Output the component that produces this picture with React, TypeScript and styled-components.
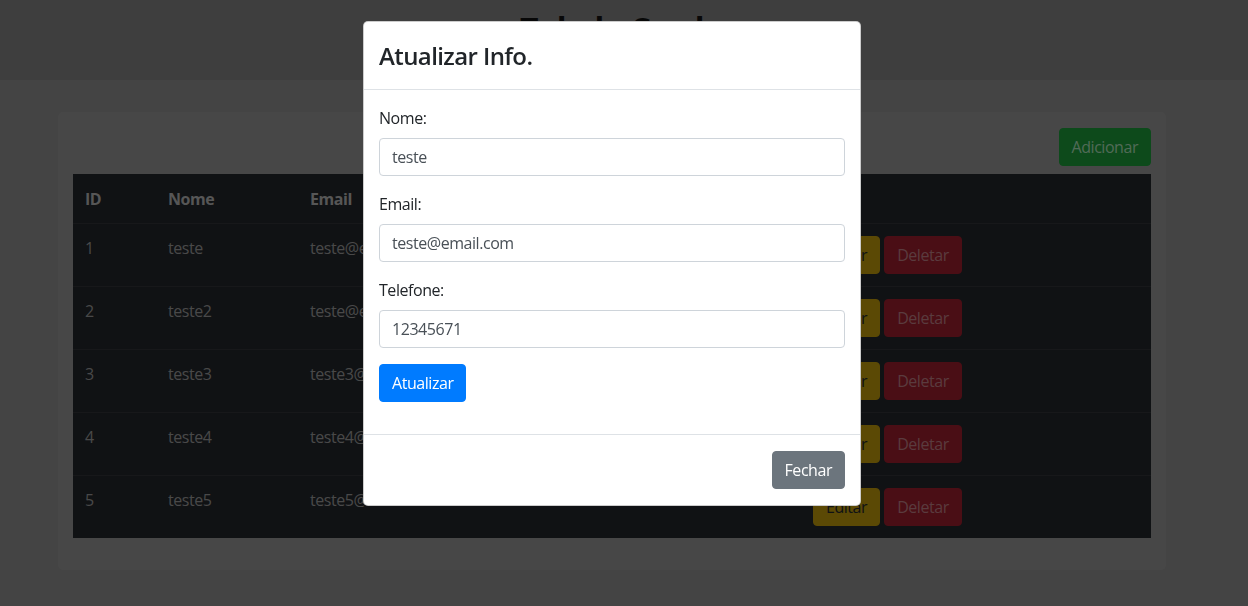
import React from "react";
import styled, { createGlobalStyle } from "styled-components";

const Global = createGlobalStyle`
  html, body { margin: 0; padding: 0; }
  body {
    background: #888888;
    font-family: "Open Sans", "Noto Sans", Arial, sans-serif;
    font-size: 16px;
    line-height: 1.5;
    letter-spacing: -0.45px;
    color: #212529;
    overflow: hidden;
  }
  * { box-sizing: border-box; }
`;

const Page = styled.div`
  min-height: 606px;
  padding-right: 24px;
`;

const TopBar = styled.header`
  height: 80px;
  margin-right: -24px;
  padding: 10px 24px 0 0;
  background: #7c7c7c;
`;

const PageTitle = styled.h1`
  margin: 0;
  text-align: center;
  font-size: 32px;
  line-height: 1.2;
  font-weight: 700;
  letter-spacing: -0.6px;
  color: #111;
`;

const Container = styled.main`
  width: 1108px;
  margin: 32px auto 0;
`;

const Card = styled.section`
  background: #8f8f8f;
  border-radius: 5px;
  padding: 16px 15px 32px;
`;

const Toolbar = styled.div`
  display: flex;
  justify-content: flex-end;
  margin-bottom: 8px;
`;

const Btn = styled.button<{ $bg: string; $fg: string }>`
  display: inline-block;
  height: 38px;
  padding: 6px 12px;
  border: 1px solid ${(p) => p.$bg};
  border-radius: 4px;
  background: ${(p) => p.$bg};
  color: ${(p) => p.$fg};
  font-family: inherit;
  font-size: 16px;
  line-height: 24px;
  letter-spacing: inherit;
  cursor: pointer;
`;

const Table = styled.table`
  width: 100%;
  border-collapse: collapse;
  background: #212529;
  table-layout: fixed;
`;

const Th = styled.th<{ $w?: number }>`
  width: ${(p) => (p.$w ? `${p.$w}px` : "auto")};
  text-align: left;
  padding: 12px;
  border-top: 1px solid #212529;
  color: #acacac;
  font-weight: 700;
  vertical-align: top;
`;

const Td = styled.td`
  padding: 12px;
  border-top: 1px solid #2e3135;
  color: #929292;
  vertical-align: top;
  white-space: nowrap;
  overflow: hidden;
`;

const Actions = styled.div`
  display: flex;
  gap: 4px;
`;

const Backdrop = styled.div`
  position: fixed;
  inset: 0;
  background: rgba(0, 0, 0, 0.5);
  z-index: 10;
`;

const ModalWrap = styled.div`
  position: fixed;
  top: 21px;
  left: 0;
  right: 24px;
  display: flex;
  justify-content: center;
  z-index: 20;
`;

const Dialog = styled.div`
  width: 498px;
  background: #fff;
  border: 1px solid rgba(0, 0, 0, 0.2);
  border-radius: 5px;
  display: flex;
  flex-direction: column;
`;

const ModalHeader = styled.div`
  padding: 16px 15px;
  border-bottom: 1px solid #dee2e6;
`;

const ModalTitle = styled.h5`
  margin: 0;
  font-size: 24px;
  font-weight: 600;
  line-height: 35px;
  letter-spacing: -0.6px;
  color: #212529;
`;

const ModalBody = styled.div`
  padding: 16px 15px;
`;

const Field = styled.div`
  margin-bottom: 16px;
`;

const Label = styled.label`
  display: block;
  margin-bottom: 8px;
  color: #212529;
`;

const Input = styled.input`
  display: block;
  width: 100%;
  height: 38px;
  padding: 6px 12px;
  border: 1px solid #ced4da;
  border-radius: 4px;
  font-family: inherit;
  font-size: 16px;
  line-height: 24px;
  letter-spacing: inherit;
  color: #495057;
  background: #fff;
  outline: none;
`;

const ModalFooter = styled.div`
  display: flex;
  justify-content: flex-end;
  padding: 16px 15px;
  border-top: 1px solid #dee2e6;
`;

const rows = [
  { id: 1, nome: "teste", email: "teste@email.com", tel: "12345671" },
  { id: 2, nome: "teste2", email: "teste@email2.com", tel: "123456" },
  { id: 3, nome: "teste3", email: "teste3@email.com", tel: "123456" },
  { id: 4, nome: "teste4", email: "teste4@email.com", tel: "123456" },
  { id: 5, nome: "teste5", email: "teste5@email.com", tel: "123456" },
];

export default function App() {
  return (
    <>
      <Global />
      <Page>
        <TopBar>
          <PageTitle>Tabela Crud</PageTitle>
        </TopBar>
        <Container>
          <Card>
            <Toolbar>
              <Btn $bg="#1a9436" $fg="#a3d4af">Adicionar</Btn>
            </Toolbar>
            <Table>
              <thead>
                <tr>
                  <Th $w={83}>ID</Th>
                  <Th $w={142}>Nome</Th>
                  <Th $w={310}>Email</Th>
                  <Th $w={193}>Telefone</Th>
                  <Th>Ações</Th>
                </tr>
              </thead>
              <tbody>
                {rows.map((r) => (
                  <tr key={r.id}>
                    <Td>{r.id}</Td>
                    <Td>{r.nome}</Td>
                    <Td>{r.email}</Td>
                    <Td>{r.tel}</Td>
                    <Td>
                      <Actions>
                        <Btn $bg="#b6920a" $fg="#212529">Editar</Btn>
                        <Btn $bg="#941c2a" $fg="#b4767c">Deletar</Btn>
                      </Actions>
                    </Td>
                  </tr>
                ))}
              </tbody>
            </Table>
          </Card>
        </Container>
      </Page>
      <Backdrop />
      <ModalWrap>
        <Dialog>
          <ModalHeader>
            <ModalTitle>Atualizar Info.</ModalTitle>
          </ModalHeader>
          <ModalBody>
            <Field>
              <Label>Nome:</Label>
              <Input defaultValue="teste" />
            </Field>
            <Field>
              <Label>Email:</Label>
              <Input defaultValue="teste@email.com" />
            </Field>
            <Field>
              <Label>Telefone:</Label>
              <Input defaultValue="12345671" />
            </Field>
            <Field>
              <Btn $bg="#007bff" $fg="#fff">Atualizar</Btn>
            </Field>
          </ModalBody>
          <ModalFooter>
            <Btn $bg="#6c757d" $fg="#fff">Fechar</Btn>
          </ModalFooter>
        </Dialog>
      </ModalWrap>
    </>
  );
}
